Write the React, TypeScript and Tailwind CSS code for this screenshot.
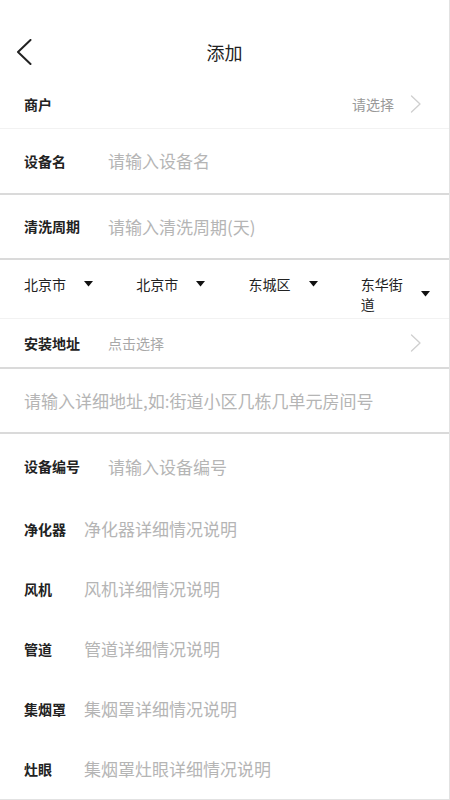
const font = { fontFamily: '"Noto Sans CJK SC", "Noto Sans", sans-serif' };

function BackArrow() {
  return (
    <svg width="16" height="26" viewBox="0 0 16 26" fill="none" className="absolute left-[16px]">
      <path d="M14.5 1 L2 13 L14.5 25" stroke="#222" strokeWidth="2" strokeLinecap="round" strokeLinejoin="round" />
    </svg>
  );
}

function ChevronRight() {
  return (
    <svg width="12" height="18" viewBox="0 0 12 18" fill="none" className="shrink-0">
      <path d="M1.5 1 L10 9 L1.5 17" stroke="#cfcfcf" strokeWidth="1.3" strokeLinecap="round" strokeLinejoin="round" />
    </svg>
  );
}

function Caret() {
  return (
    <svg width="9" height="6" viewBox="0 0 9 6" className="shrink-0">
      <path d="M0 0 H9 L4.5 5.5 Z" fill="#111" />
    </svg>
  );
}

const regions = ['北京市', '北京市', '东城区', '东华街道'];

const details = [
  { label: '净化器', hint: '净化器详细情况说明' },
  { label: '风机', hint: '风机详细情况说明' },
  { label: '管道', hint: '管道详细情况说明' },
  { label: '集烟罩', hint: '集烟罩详细情况说明' },
  { label: '灶眼', hint: '集烟罩灶眼详细情况说明' },
];

export default function App() {
  return (
    <div style={font} className="w-[450px] h-[800px] overflow-hidden bg-white border-r border-b border-[#e2e2e2] text-[#222]">
      {/* header */}
      <div className="h-[80px] pt-[28px]">
        <div className="relative h-[48px] flex items-center justify-center">
          <BackArrow />
          <span className="text-[18px] leading-none">添加</span>
        </div>
      </div>

      {/* merchant */}
      <div className="h-[49px] flex items-center pl-6 pr-[27px] border-b border-[#f2f2f2]">
        <span className="text-[14px] font-semibold">商户</span>
        <span className="ml-auto mr-[16px] text-[14px] text-[#999]">请选择</span>
        <ChevronRight />
      </div>

      <div className="h-[66px] flex items-center pl-6 border-b-2 border-[#dadada]">
        <span className="w-[84px] text-[14px] font-semibold">设备名</span>
        <span className="text-[17px] text-[#b5b5b5]">请输入设备名</span>
      </div>

      <div className="h-[65px] flex items-center pl-6 border-b-2 border-[#dadada]">
        <span className="w-[84px] text-[14px] font-semibold">清洗周期</span>
        <span className="text-[17px] text-[#b5b5b5]">请输入清洗周期(天)</span>
      </div>

      {/* region pickers */}
      <div className="grid grid-cols-4 items-start pt-[14px] pb-[4px] border-b border-[#f2f2f2]">
        {regions.map((r, i) => (
          <div key={i} className="flex items-center pl-6">
            <span className="w-[46px] text-[14px] leading-[20px]">{r}</span>
            <span className="ml-[14px]">
              <Caret />
            </span>
          </div>
        ))}
      </div>

      <div className="h-[50px] flex items-center pl-6 pr-[27px] border-b-2 border-[#dadada]">
        <span className="w-[84px] text-[14px] font-semibold">安装地址</span>
        <span className="text-[14px] text-[#a8a8a8]">点击选择</span>
        <span className="ml-auto">
          <ChevronRight />
        </span>
      </div>

      <div className="h-[65px] flex items-center pl-6 border-b-2 border-[#dadada]">
        <span className="text-[17px] text-[#b5b5b5]">请输入详细地址,如:街道小区几栋几单元房间号</span>
      </div>

      <div className="h-[65px] flex items-center pl-6">
        <span className="w-[84px] text-[14px] font-semibold">设备编号</span>
        <span className="text-[17px] text-[#b5b5b5]">请输入设备编号</span>
      </div>

      {details.map((d) => (
        <div key={d.label} className="h-[60px] flex items-center pl-6">
          <span className="w-[60px] text-[14px] font-semibold">{d.label}</span>
          <span className="text-[17px] text-[#b5b5b5]">{d.hint}</span>
        </div>
      ))}
    </div>
  );
}
